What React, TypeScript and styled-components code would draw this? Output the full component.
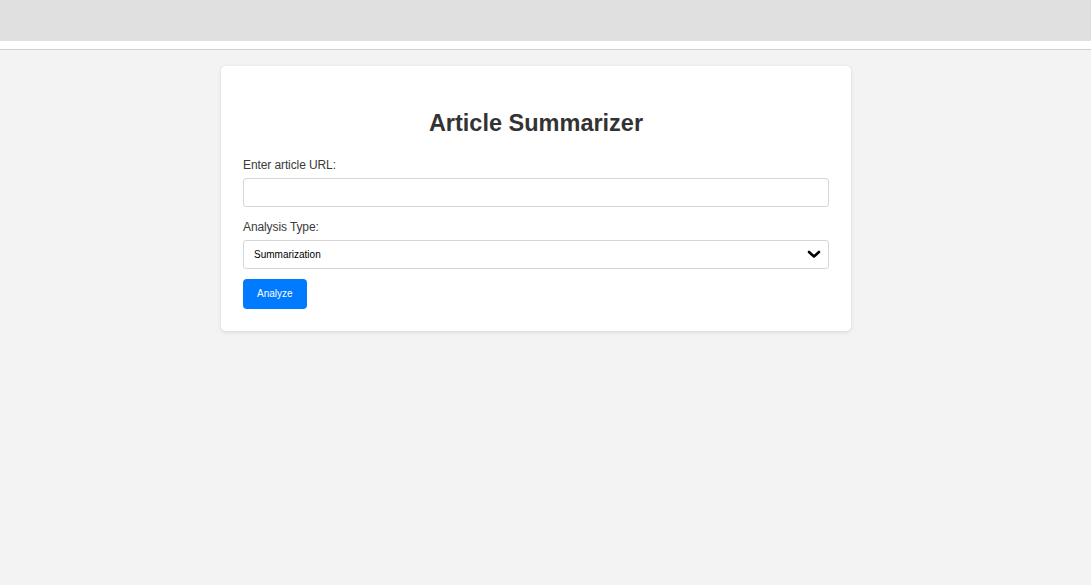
import React from "react";
import styled, { createGlobalStyle } from "styled-components";

const GlobalStyle = createGlobalStyle`
  html, body {
    margin: 0;
    padding: 0;
    background: #f3f3f3;
    font-family: "Liberation Sans", Arial, sans-serif;
  }
  #root {
    min-height: 100vh;
    display: flex;
    flex-direction: column;
  }
`;

const TopBar = styled.div`
  height: 41px;
  background: #e0e0e0;
`;

const Strip = styled.header`
  height: 8px;
  background: #ffffff;
  border-bottom: 1px solid #cfcfcf;
`;

const Main = styled.main`
  flex: 1;
  padding: 16px 19px 0 0;
  display: flex;
  justify-content: center;
  align-items: flex-start;
`;

const Card = styled.section`
  width: 630px;
  box-sizing: border-box;
  padding: 22px;
  background: #ffffff;
  border-radius: 5px;
  box-shadow: 0 1px 4px rgba(0, 0, 0, 0.12);
  display: flex;
  flex-direction: column;
`;

const Title = styled.h1`
  margin: 22px 0 20px;
  text-align: center;
  font-size: 23.5px;
  font-weight: bold;
  line-height: 27.6px;
  color: #333333;
`;

const Label = styled.label`
  display: block;
  font-size: 12px;
  line-height: 14px;
  letter-spacing: -0.1px;
  color: #3a3a3a;
  margin-bottom: 6px;
`;

const TextInput = styled.input`
  box-sizing: border-box;
  width: 100%;
  height: 29px;
  margin: 0 0 13px;
  padding: 0 10px;
  border: 1px solid #d6d6d6;
  border-radius: 3px;
  font-family: inherit;
  font-size: 10px;
  background: #fff;
  outline: none;
`;

const SelectWrap = styled.div`
  position: relative;
  margin-bottom: 10px;
`;

const Select = styled.select`
  box-sizing: border-box;
  width: 100%;
  height: 29px;
  margin: 0;
  padding: 0 10px;
  border: 1px solid #d6d6d6;
  border-radius: 3px;
  font-family: inherit;
  font-size: 10px;
  color: #000;
  background: #fff;
  appearance: none;
  -webkit-appearance: none;
  outline: none;
`;

const Chevron = styled.svg`
  position: absolute;
  right: 8px;
  top: 10px;
  pointer-events: none;
`;

const Button = styled.button`
  align-self: flex-start;
  box-sizing: border-box;
  height: 30px;
  padding: 0 14px;
  border: none;
  border-radius: 4px;
  background: #007bff;
  color: #ffffff;
  font-family: inherit;
  font-size: 10px;
  cursor: pointer;
`;

export default function App() {
  return (
    <>
      <GlobalStyle />
      <TopBar />
      <Strip />
      <Main>
        <Card>
          <Title>Article Summarizer</Title>
          <Label htmlFor="url">Enter article URL:</Label>
          <TextInput id="url" type="text" />
          <Label htmlFor="type">Analysis Type:</Label>
          <SelectWrap>
            <Select id="type" defaultValue="summarization">
              <option value="summarization">Summarization</option>
              <option value="sentiment">Sentiment Analysis</option>
            </Select>
            <Chevron width="14" height="9" viewBox="0 0 14 9">
              <polyline
                points="2,2 7,6.5 12,2"
                fill="none"
                stroke="#000"
                strokeWidth="2.6"
                strokeLinecap="round"
                strokeLinejoin="round"
              />
            </Chevron>
          </SelectWrap>
          <Button type="button">Analyze</Button>
        </Card>
      </Main>
    </>
  );
}
